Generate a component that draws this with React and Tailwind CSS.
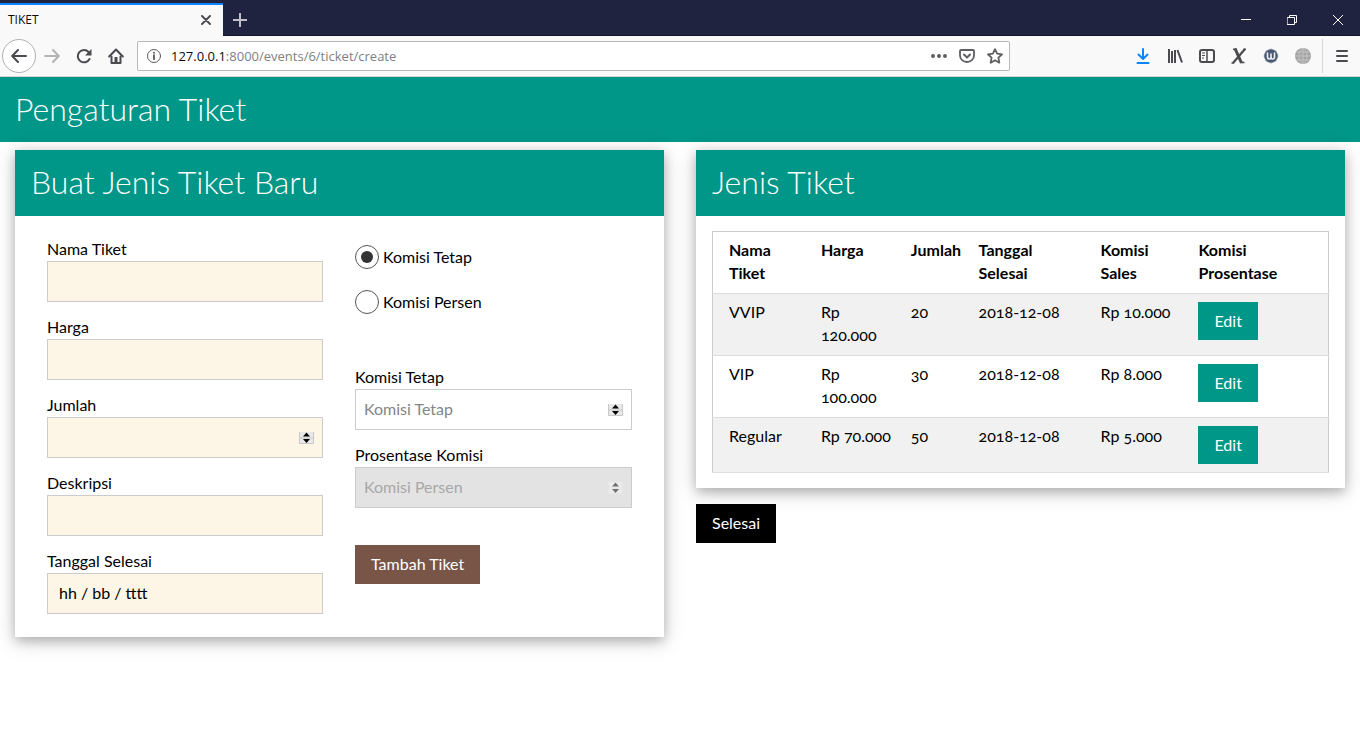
import React from 'react';

const tickets = [
  { name: 'VVIP', price: ['Rp', '120.000'], qty: '20', end: '2018-12-08', sales: 'Rp 10.000' },
  { name: 'VIP', price: ['Rp', '100.000'], qty: '30', end: '2018-12-08', sales: 'Rp 8.000' },
  { name: 'Regular', price: ['Rp 70.000'], qty: '50', end: '2018-12-08', sales: 'Rp 5.000' },
];

function Glyph({ children, className = '', ...rest }) {
  return (
    <svg
      aria-hidden="true"
      width="16"
      height="16"
      viewBox="0 0 16 16"
      fill="none"
      stroke="currentColor"
      strokeWidth="2"
      strokeLinecap="round"
      strokeLinejoin="round"
      className={`block shrink-0 ${className}`}
      {...rest}
    >
      {children}
    </svg>
  );
}

function ToolButton({ label, className = '', children }) {
  return (
    <button type="button" aria-label={label} className={`flex h-8 w-8 shrink-0 items-center justify-center ${className}`}>
      {children}
    </button>
  );
}

function TitleBar() {
  return (
    <div className="flex h-9 items-end bg-[#20233f]">
      <div className="flex h-[33px] w-[223px] items-center justify-between border-t-2 border-[#0a84ff] bg-[#f9f9fa] pr-3 pb-0.5 pl-2 text-[#0c0c0d]">
        <span className="text-xs">TIKET</span>
        <button type="button" aria-label="Close tab" className="text-[#4a4a4f]">
          <Glyph width="10" height="10" viewBox="0 0 10 10" strokeWidth="1.9">
            <path d="M1 1l8 8M9 1l-8 8" />
          </Glyph>
        </button>
      </div>
      <div className="flex h-9 flex-1 items-center border-b border-[#14172b] text-white">
        <button type="button" aria-label="New tab" className="mt-1 flex h-8 w-[34px] items-center justify-center text-[#c0c1c9]">
          <Glyph strokeWidth="2" strokeLinecap="butt">
            <path d="M8 1v14M1 8h14" />
          </Glyph>
        </button>
        <div className="-mr-px ml-auto flex pt-1">
          <button type="button" aria-label="Minimize" className="flex h-8 w-[46px] items-center justify-center">
            <Glyph width="10" height="10" viewBox="0 0 10 10" strokeWidth="1" strokeLinecap="butt">
              <path d="M0 4.500h10" />
            </Glyph>
          </button>
          <button type="button" aria-label="Restore" className="flex h-8 w-[46px] items-center justify-center">
            <Glyph width="10" height="10" viewBox="0 0 10 10" strokeWidth="1" strokeLinejoin="miter">
              <path d="M.5 2.500h7v7h-7zM2.500 2.500v-2h7v7h-2" />
            </Glyph>
          </button>
          <button type="button" aria-label="Close" className="flex h-8 w-[46px] items-center justify-center">
            <Glyph width="10" height="10" viewBox="0 0 10 10" strokeWidth="1">
              <path d="M0 0l10 10M10 0l-10 10" />
            </Glyph>
          </button>
        </div>
      </div>
    </div>
  );
}

function Toolbar() {
  return (
    <div className="flex h-[41px] items-center border-b border-[#d4d4d6] bg-[#f9f9fa] pr-[2px] pl-[2px] text-[#4a4a4f]">
      <button
        type="button"
        aria-label="Back"
        className="flex h-[34px] w-[34px] shrink-0 items-center justify-center rounded-full border border-[#b1b1b3] bg-white"
      >
        <Glyph>
          <path d="M15 8H1.500M7 2L1.200 8 7 14" />
        </Glyph>
      </button>
      <ToolButton label="Forward" className="text-[#b4b4b6]">
        <Glyph>
          <path d="M1 8h13.500M9 2l5.800 6L9 14" />
        </Glyph>
      </ToolButton>
      <ToolButton label="Reload">
        <Glyph>
          <path d="M13.500 11A6.200 6.200 0 1 1 12.600 4" />
          <path d="M15.500 1v6.500H9z" fill="currentColor" stroke="none" />
        </Glyph>
      </ToolButton>
      <ToolButton label="Home">
        <Glyph>
          <path d="M1.200 8.500L8 1.500l6.800 7" />
          <path d="M3.500 8.500V15h9V8.500" />
          <path d="M8 15V9" strokeWidth="3" strokeLinecap="butt" />
        </Glyph>
      </ToolButton>
      <div className="ml-[5px] flex h-[30px] min-w-0 flex-1 items-center rounded-xs border border-[#b8b8ba] bg-white pr-1.5 pl-2">
        <Glyph strokeWidth="1" className="text-[#5a5a5e]">
          <circle cx="8" cy="8" r="6.500" />
          <path d="M8 7.200v4" strokeWidth="1.800" />
          <path d="M8 4.700v.1" strokeWidth="2" />
        </Glyph>
        <div className="ml-[9px] min-w-0 flex-1 truncate pt-0.5 text-[13px] text-[#808083]">
          <span className="text-[#0c0c0d]">127.0.0.1</span>:8000/events/6/ticket/create
        </div>
        <div className="flex shrink-0 gap-3 text-[#5f5f63]">
          <button type="button" aria-label="Page actions">
            <Glyph fill="currentColor" stroke="none">
              <circle cx="2" cy="8" r="2" />
              <circle cx="8" cy="8" r="2" />
              <circle cx="14" cy="8" r="2" />
            </Glyph>
          </button>
          <button type="button" aria-label="Save to Pocket">
            <Glyph>
              <path d="M2 2h12a1 1 0 0 1 1 1v4.500a7 6.500 0 0 1-14 0V3a1 1 0 0 1 1-1z" strokeWidth="1.800" />
              <path d="M5 6.500l3 3 3-3" />
            </Glyph>
          </button>
          <button type="button" aria-label="Bookmark">
            <Glyph strokeWidth="1.800">
              <path d="M8 1.200l2.100 4.500 4.900.6-3.600 3.400.9 5L8 12.300l-4.300 2.400.9-5L1 6.300l4.900-.6z" />
            </Glyph>
          </button>
        </div>
      </div>
      <div className="ml-[117px] flex shrink-0 items-center">
        <ToolButton label="Downloads" className="text-[#0a84ff]">
          <Glyph>
            <path d="M8 1v9.500M3.500 6.500L8 11l4.500-4.500M2.500 15h11" />
          </Glyph>
        </ToolButton>
        <ToolButton label="Library">
          <Glyph strokeLinecap="butt">
            <path d="M2 1v14M5 3v12M8 2v13M10.500 2l4.500 12.500" />
          </Glyph>
        </ToolButton>
        <ToolButton label="Sidebars">
          <Glyph>
            <rect x="1" y="2" width="14" height="12" rx="2" />
            <path d="M8 2v12" strokeWidth="1.500" />
            <path d="M3 5h3M3 7.500h3M3 10h2" strokeWidth="1" strokeLinecap="butt" />
          </Glyph>
        </ToolButton>
        <ToolButton label="X extension">
          <Glyph strokeLinecap="butt">
            <path d="M4 .5l6.500 14.500" strokeWidth="3" />
            <path d="M14 1L2 15" strokeWidth="2.200" />
            <path d="M2 1.200h3.500M12.500 1.200H15M0.500 15H3M10 14.500h3.500" strokeWidth="1.500" />
          </Glyph>
        </ToolButton>
        <ToolButton label="W extension">
          <Glyph>
            <path d="M8 .5l5.300 2.200L15.500 8l-2.200 5.300L8 15.500l-5.300-2.200L.5 8l2.200-5.300z" fill="#94a0b3" stroke="none" />
            <circle cx="8" cy="8" r="6.500" fill="#4a5972" stroke="none" />
            <path d="M4.500 5v3.500q0 2.500 1.700 2.500T8 9V6v3q0 2 1.800 2t1.700-2.500V5" stroke="#eef1f6" strokeWidth="1.600" />
          </Glyph>
        </ToolButton>
        <ToolButton label="Globe extension">
          <Glyph strokeWidth="1">
            <circle cx="8" cy="8" r="8" fill="#a3a3a3" stroke="none" />
            <path d="M8 0v16M0 8h16M1.500 4h13M1.500 12h13" stroke="#c4c4c4" />
            <ellipse cx="8" cy="8" rx="4" ry="7.500" stroke="#c4c4c4" />
          </Glyph>
        </ToolButton>
        <div className="mx-[3px] h-[34px] w-px bg-[#d7d7db]" />
        <ToolButton label="Menu">
          <Glyph>
            <path d="M3 3h10M3 8h10M3 13h10" />
          </Glyph>
        </ToolButton>
      </div>
    </div>
  );
}

function Spinner({ disabled }) {
  return (
    <svg
      aria-hidden="true"
      width="15"
      height="12"
      viewBox="0 0 15 12"
      className={`pointer-events-none absolute top-1/2 right-[9px] -translate-y-1/2 ${disabled ? 'opacity-50' : ''}`}
    >
      <path d="M0 0h15v12H0z" fill={disabled ? '#f4f4f4' : '#e8e8e8'} />
      <path d="M.5 0v11.500h14V0M0 6h15" fill="none" stroke={disabled ? '#e8e8e8' : '#c8c8c8'} />
      <path d="M7.500 0.500L11 4.500H4zM7.500 11L4 7h7z" fill="#000" />
    </svg>
  );
}

function Field({ id, label, type = 'text', tone = 'bg-[#fdf5e6]', inputClass = '', ...rest }) {
  return (
    <div>
      <label htmlFor={id} className="block pb-0.5 leading-5">
        {label}
      </label>
      <div className="relative">
        <input
          id={id}
          type={type}
          className={`block h-[41px] w-full border border-[#ccc] px-2 pb-0.5 [appearance:textfield] [&::-webkit-inner-spin-button]:appearance-none ${tone} ${inputClass}`}
          {...rest}
        />
        {type === 'number' && <Spinner disabled={rest.disabled} />}
      </div>
    </div>
  );
}

function Radio({ label, ...rest }) {
  return (
    <label className="flex items-center gap-1">
      <input
        type="radio"
        name="commission"
        className="flex h-6 w-6 appearance-none items-center justify-center rounded-full border border-[#555] bg-white before:h-3 before:w-3 before:rounded-full checked:before:bg-[#333]"
        {...rest}
      />
      {label}
    </label>
  );
}

function Card({ title, children }) {
  return (
    <section className="bg-white shadow-[0_4px_10px_0_rgba(0,0,0,0.2),0_4px_20px_0_rgba(0,0,0,0.19)]">
      <h2 className="bg-[#009688] px-4 pt-[9px] pb-[11px] text-[32px] leading-[46px] font-light text-white">{title}</h2>
      {children}
    </section>
  );
}

function TicketForm() {
  return (
    <form className="grid grid-cols-[276fr_277fr] gap-8 px-8 py-[23px]" onSubmit={(e) => e.preventDefault()}>
      <div className="flex flex-col gap-[15px]">
        <Field id="name" label="Nama Tiket" />
        <Field id="price" label="Harga" />
        <Field id="qty" label="Jumlah" type="number" />
        <Field id="desc" label="Deskripsi" />
        <Field id="end" label="Tanggal Selesai" placeholder="hh / bb / tttt" inputClass="pl-[11px] placeholder:text-black" />
      </div>
      <div>
        <div className="flex flex-col gap-[21px] pt-[6px]">
          <Radio label="Komisi Tetap" defaultChecked />
          <Radio label="Komisi Persen" />
        </div>
        <div className="mt-[53px] flex flex-col gap-[15px]">
          <Field
            id="fixed"
            label="Komisi Tetap"
            type="number"
            placeholder="Komisi Tetap"
            tone="bg-white"
            inputClass="placeholder:text-[#858585]"
          />
          <Field
            id="percent"
            label="Prosentase Komisi"
            type="number"
            placeholder="Komisi Persen"
            tone="bg-[#e3e3e3]"
            inputClass="placeholder:text-[#a8a8a8]"
            disabled
          />
        </div>
        <button type="submit" className="mt-[37px] h-[39px] bg-[#795548] px-4 pb-0.5 text-white">
          Tambah Tiket
        </button>
      </div>
    </form>
  );
}

function TicketTable() {
  const cell = 'pt-[6px] pb-[9px] pl-2 first:pl-4 align-top';
  return (
    <div className="px-4 py-[15px]">
      <table className="w-full table-fixed border-collapse border border-[#ccc] text-left leading-[23px]">
        <colgroup>
          <col className="w-[16.3%]" />
          <col className="w-[14.6%]" />
          <col className="w-[11%]" />
          <col className="w-[19.8%]" />
          <col className="w-[15.9%]" />
          <col />
        </colgroup>
        <thead>
          <tr className="border-b border-[#ddd] font-bold">
            <th className={cell}>Nama<br />Tiket</th>
            <th className={cell}>Harga</th>
            <th className={cell}>Jumlah</th>
            <th className={cell}>Tanggal<br />Selesai</th>
            <th className={cell}>Komisi<br />Sales</th>
            <th className={cell}>Komisi<br />Prosentase</th>
          </tr>
        </thead>
        <tbody>
          {tickets.map((t) => (
            <tr key={t.name} className="border-b border-[#ddd] odd:bg-[#f1f1f1]">
              <td className={cell}>{t.name}</td>
              <td className={`${cell} whitespace-nowrap`}>
                {t.price.map((line) => (
                  <span key={line} className="block">{line}</span>
                ))}
              </td>
              <td className={cell}>{t.qty}</td>
              <td className={cell}>{t.end}</td>
              <td className={cell}>{t.sales}</td>
              <td className="py-2 pl-2 align-top">
                <button type="button" className="block h-[38px] bg-[#009688] px-4 pb-0.5 text-white">Edit</button>
              </td>
            </tr>
          ))}
        </tbody>
      </table>
    </div>
  );
}

export default function App() {
  return (
    <div className="min-h-screen bg-white font-['Open_Sans',sans-serif]">
      <TitleBar />
      <Toolbar />
      <div className="font-['Lato',sans-serif] text-base text-black oldstyle-nums">
        <header className="bg-[#009688] px-[15px] pt-[9px] pb-[11px]">
          <h1 className="text-[32px] leading-[45px] font-light text-white">Pengaturan Tiket</h1>
        </header>
        <main className="grid grid-cols-2 items-start gap-8 px-[15px] pt-2">
          <Card title="Buat Jenis Tiket Baru">
            <TicketForm />
          </Card>
          <div>
            <Card title="Jenis Tiket">
              <TicketTable />
            </Card>
            <button type="button" className="mt-4 h-[39px] bg-black px-4 pb-px text-white">
              Selesai
            </button>
          </div>
        </main>
      </div>
    </div>
  );
}
